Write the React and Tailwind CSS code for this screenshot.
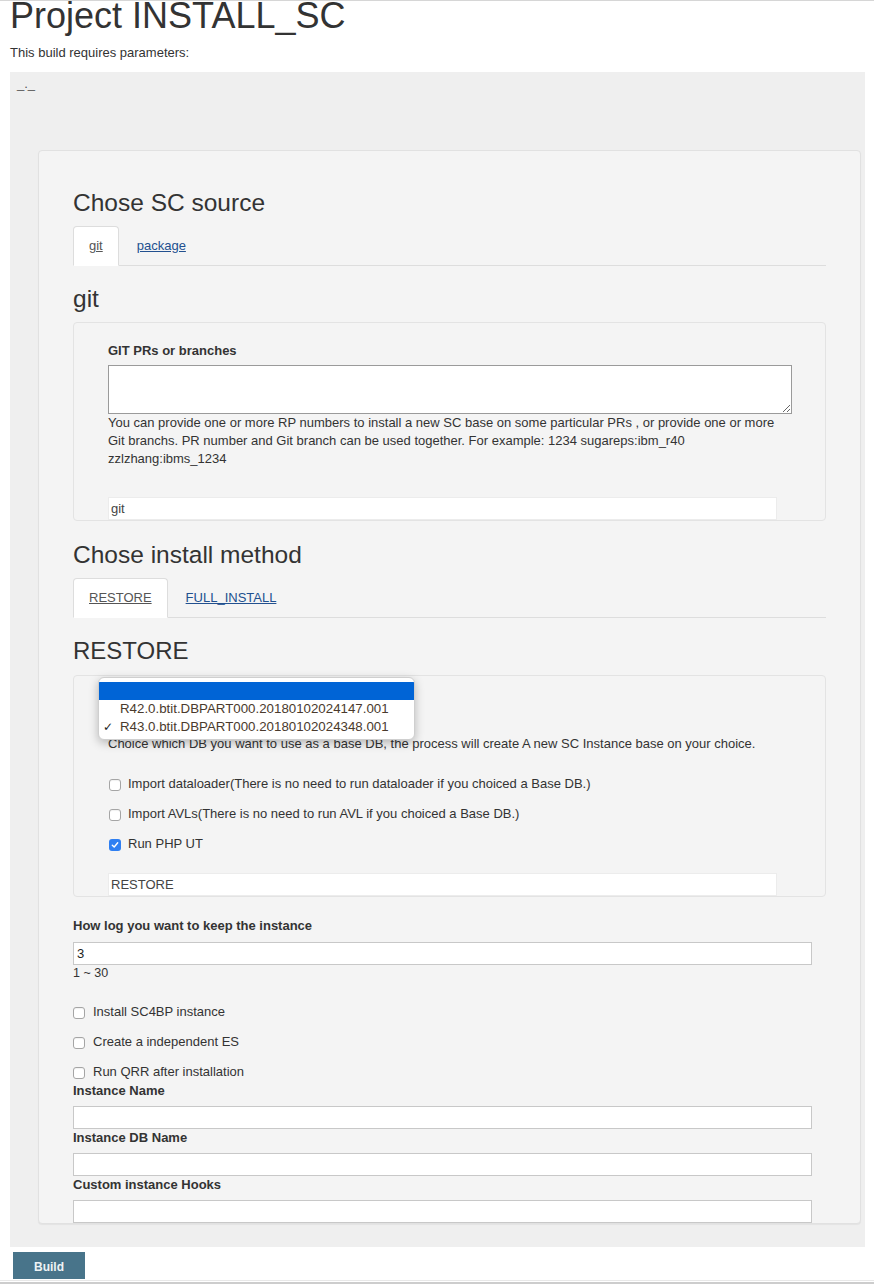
import React from "react";

function Box({ checked }) {
  if (checked) {
    return (
      <span className="flex h-[12px] w-[12px] shrink-0 items-center justify-center rounded-[3px] bg-[#2f7ff2]">
        <svg width="8" height="8" viewBox="0 0 8 8">
          <path d="M1.3 4.2 L3.2 6 L6.7 1.8" fill="none" stroke="white" strokeWidth="1.4" strokeLinecap="round" strokeLinejoin="round" />
        </svg>
      </span>
    );
  }
  return (
    <span className="block h-[12px] w-[12px] shrink-0 rounded-[3px] border border-[#a5a5a5] bg-white shadow-[inset_0_1px_1px_rgba(0,0,0,0.06)]" />
  );
}

function Check({ label, checked, inWell }) {
  return (
    <div className={`flex h-[18px] items-center ${inWell ? "gap-[7px] pl-[1px]" : "gap-[8px]"}`}>
      <span className="translate-y-[1px]">
        <Box checked={checked} />
      </span>
      <span className="text-[13px] leading-[18px]">{label}</span>
    </div>
  );
}

function Tabs({ active, other }) {
  return (
    <div className="mt-[9px] flex h-[40px] border-b border-[#dddddd]">
      <div className="mr-[2px] h-[40px] rounded-t-[4px] border border-[#dddddd] border-b-transparent bg-white px-[15px] text-[13px] leading-[38px] text-[#555555] underline">
        {active}
      </div>
      <div className="mr-[2px] h-[40px] border border-transparent px-[15px] text-[13px] leading-[38px] text-[#22508f] underline">
        {other}
      </div>
    </div>
  );
}

export default function App() {
  return (
    <div className="relative h-[1284px] w-[874px] overflow-hidden border-t border-[#d6d6d6] bg-white font-['Liberation_Sans',Arial,sans-serif] text-[#333333]">
      <h1 className="pl-[10px] text-[36px] font-normal leading-[30px] text-[#333333]">Project INSTALL_SC</h1>
      <div className="mt-[14px] pl-[10px] text-[13px] leading-[16px]">This build requires parameters:</div>

      <div className="ml-[10px] mt-[11px] w-[855px] bg-[#efefef] pb-[23px] pt-[4px]">
        <div className="pl-[7px] text-[13px] leading-[16px] text-[#555555]">_._</div>

        <div className="ml-[28px] mt-[58px] w-[823px] rounded-[4px] border border-[#e1e1e1] bg-[#f4f4f4] px-[34px] pt-[38px] shadow-[0_1px_1px_rgba(0,0,0,0.05)]">
          <h3 className="text-[24.5px] font-normal leading-[28px]">Chose SC source</h3>
          <Tabs active="git" other="package" />
          <h3 className="mt-[19px] text-[24.5px] font-normal leading-[28px]">git</h3>

          <div className="mt-[9px] rounded-[4px] border border-[#e3e3e3] bg-[#f4f4f4] pl-[34px] pt-[20px]">
            <div className="text-[13px] font-bold leading-[16px]">GIT PRs or branches</div>
            <textarea className="mt-[6px] block h-[49px] w-[684px] border border-[#9a9a9a] bg-white" defaultValue="" />
            <div className="w-[684px] text-[13px] leading-[18px]">
              You can provide one or more RP numbers to install a new SC base on some particular PRs , or provide one or more Git branchs. PR number and Git branch can be used together. For example: 1234 sugareps:ibm_r40 zzlzhang:ibms_1234
            </div>
            <input
              className="mt-[29px] block h-[23px] w-[669px] border border-[#ececec] bg-white pl-[2px] text-[13px] text-[#444444] outline-none"
              defaultValue="git"
              readOnly
            />
          </div>

          <h3 className="mt-[20px] text-[24.5px] font-normal leading-[28px]">Chose install method</h3>
          <Tabs active="RESTORE" other="FULL_INSTALL" />
          <h3 className="mt-[19px] text-[24px] font-normal leading-[28px]">RESTORE</h3>

          <div className="relative mt-[10px] rounded-[4px] border border-[#e3e3e3] bg-[#f4f4f4] pl-[34px] pt-[59px]">
            <div className="text-[13px] leading-[18px]">
              Choice which DB you want to use as a base DB, the process will create A new SC Instance base on your choice.
            </div>
            <div className="mt-[22px] flex flex-col gap-[12px]">
              <Check inWell label="Import dataloader(There is no need to run dataloader if you choiced a Base DB.)" />
              <Check inWell label="Import AVLs(There is no need to run AVL if you choiced a Base DB.)" />
              <Check inWell checked label="Run PHP UT" />
            </div>
            <input
              className="mt-[20px] block h-[23px] w-[669px] border border-[#ececec] bg-white pl-[2px] text-[13px] text-[#444444] outline-none"
              defaultValue="RESTORE"
              readOnly
            />

            <div className="absolute left-[24px] top-[1px] h-[63px] w-[317px] overflow-hidden rounded-[6px] border border-[#cfcfcf] bg-white pt-[4px] shadow-[0_3px_10px_rgba(0,0,0,0.25)]">
              <div className="h-[18px] bg-[#0064d6]" />
              <div className="h-[18px] pl-[21px] text-[13.3px] leading-[18px] text-[#4a3a2d]">R42.0.btit.DBPART000.20180102024147.001</div>
              <div className="relative h-[18px] pl-[21px] text-[13.3px] leading-[18px] text-[#4a3a2d]">
                <span className="absolute left-[4px] top-0 font-['DejaVu_Sans',sans-serif] text-[12px] text-[#222222]">✓</span>
                R43.0.btit.DBPART000.20180102024348.001
              </div>
            </div>
          </div>

          <div className="mt-[21px] text-[13px] font-bold leading-[16px]">How log you want to keep the instance</div>
          <input
            className="mt-[8px] block h-[23px] w-[739px] border border-[#c8c8c8] bg-white pl-[3px] text-[13px] text-[#222222] outline-none"
            defaultValue="3"
            readOnly
          />
          <div className="text-[12.5px] leading-[16px]">1 ~ 30</div>

          <div className="mt-[22px] flex flex-col gap-[12px]">
            <Check label="Install SC4BP instance" />
            <Check label="Create a independent ES" />
            <Check label="Run QRR after installation" />
          </div>

          <div className="mt-[2px] text-[13px] font-bold leading-[16px]">Instance Name</div>
          <input className="mt-[7px] block h-[23px] w-[739px] border border-[#c8c8c8] bg-white outline-none" defaultValue="" />
          <div className="mt-[1px] text-[13px] font-bold leading-[16px]">Instance DB Name</div>
          <input className="mt-[7px] block h-[23px] w-[739px] border border-[#c8c8c8] bg-white outline-none" defaultValue="" />
          <div className="mt-[1px] text-[13px] font-bold leading-[16px]">Custom instance Hooks</div>
          <input className="mt-[7px] block h-[23px] w-[739px] border border-[#c8c8c8] bg-white outline-none" defaultValue="" />
        </div>
      </div>

      <button className="ml-[13px] mt-[5px] block h-[27px] w-[72px] bg-[#48748a] pt-[2px] text-[12px] font-bold text-[#eef3f5]">Build</button>
      <div className="mt-[1px] border-t border-[#e8e8e8]" />
      <div className="mt-[1px] border-t-2 border-[#cdcdcd]" />
    </div>
  );
}
